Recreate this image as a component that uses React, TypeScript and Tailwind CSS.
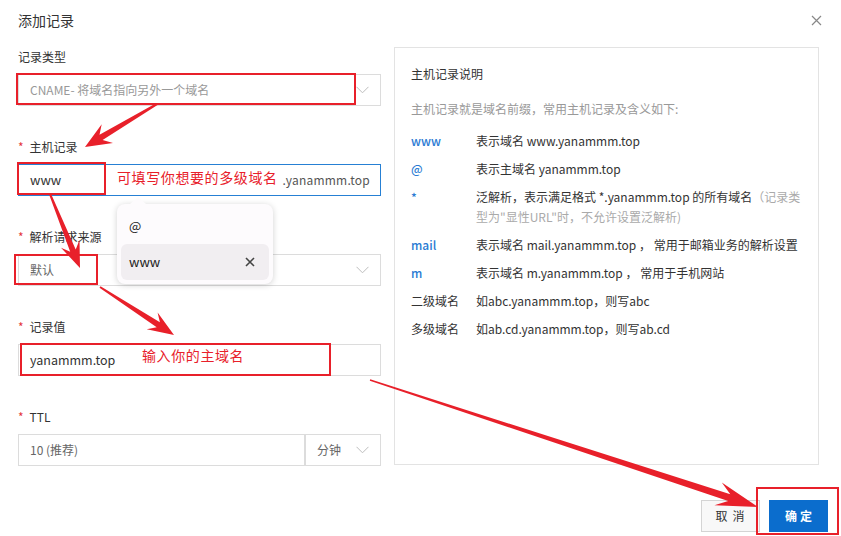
import React from "react";

const RED = "#e8202a";

type Arrow = {
  x1: number;
  y1: number;
  x2: number;
  y2: number;
  tail: number;
  neck: number;
  head: number;
  headW: number;
};

const ARROWS: Arrow[] = [
  { x1: 157, y1: 104, x2: 85, y2: 147, tail: 2, neck: 6, head: 26, headW: 22 },
  { x1: 50, y1: 194, x2: 80, y2: 268, tail: 2, neck: 6, head: 26, headW: 20 },
  { x1: 100, y1: 287, x2: 174, y2: 335, tail: 2, neck: 6, head: 26, headW: 20 },
  { x1: 370, y1: 380, x2: 758, y2: 507, tail: 1.5, neck: 7, head: 42, headW: 24 },
];

function arrowPoints(a: Arrow) {
  const dx = a.x2 - a.x1;
  const dy = a.y2 - a.y1;
  const len = Math.hypot(dx, dy);
  const ux = dx / len;
  const uy = dy / len;
  const nx = -uy;
  const ny = ux;
  const pt = (bx: number, by: number, along: number, side: number) =>
    `${(bx + ux * along + nx * side).toFixed(1)},${(by + uy * along + ny * side).toFixed(1)}`;
  return [
    pt(a.x1, a.y1, 0, a.tail / 2),
    pt(a.x2, a.y2, -a.head * 0.72, a.neck / 2),
    pt(a.x2, a.y2, -a.head, a.headW / 2),
    pt(a.x2, a.y2, 0, 0),
    pt(a.x2, a.y2, -a.head, -a.headW / 2),
    pt(a.x2, a.y2, -a.head * 0.72, -a.neck / 2),
    pt(a.x1, a.y1, 0, -a.tail / 2),
  ].join(" ");
}

function Chevron() {
  return (
    <svg width="13" height="8" viewBox="0 0 13 8" className="shrink-0">
      <path d="M0.5 0.8 L6.5 6.8 L12.5 0.8" fill="none" stroke="#bdbdbd" strokeWidth="1" />
    </svg>
  );
}

function Label({ text, required }: { text: string; required?: boolean }) {
  return (
    <div className="mb-[8px] flex h-[18px] items-center text-[12px] leading-[18px] text-[#333]">
      {required && <span className="mr-[6px] text-[12px] text-[#e4393c]">*</span>}
      {text}
    </div>
  );
}

const rows: { key: string; blue?: boolean; value: React.ReactNode }[] = [
  { key: "www", blue: true, value: "表示域名 www.yanammm.top" },
  { key: "@", blue: true, value: "表示主域名 yanammm.top" },
  {
    key: "*",
    blue: true,
    value: (
      <>
        泛解析，表示满足格式 *.yanammm.top 的所有域名
        <span className="text-[#aaa]">
          （记录类
          <br />
          型为"显性URL"时，不允许设置泛解析)
        </span>
      </>
    ),
  },
  { key: "mail", blue: true, value: "表示域名 mail.yanammm.top ， 常用于邮箱业务的解析设置" },
  { key: "m", blue: true, value: "表示域名 m.yanammm.top ， 常用于手机网站" },
  { key: "二级域名", value: "如abc.yanammm.top，则写abc" },
  { key: "多级域名", value: "如ab.cd.yanammm.top，则写ab.cd" },
];

export default function App() {
  return (
    <div
      className="relative h-[536px] w-[841px] overflow-hidden bg-white"
      style={{ fontFamily: '"Noto Sans CJK SC", "Liberation Sans", sans-serif' }}
    >
      {/* header */}
      <div className="flex items-center justify-between pl-[18px] pr-[19px] pt-[10px]">
        <h2 className="text-[14px] leading-[20px] text-[#333]">添加记录</h2>
        <svg width="11" height="11" viewBox="0 0 11 11">
          <path d="M1 1 L10 10 M10 1 L1 10" stroke="#888" strokeWidth="1.2" />
        </svg>
      </div>

      <div className="mt-[18px] flex gap-[13px] pl-[18px]">
        {/* form */}
        <div className="w-[363px]">
          <Label text="记录类型" />
          <div className="flex h-[32px] items-center justify-between border border-[#dcdcdc] pl-[11px] pr-[11px] text-[12px] text-[#999]">
            <span>CNAME- 将域名指向另外一个域名</span>
            <Chevron />
          </div>

          <div className="mt-[32px]">
            <Label text="主机记录" required />
            <div className="flex h-[32px] items-center justify-between border border-[#2680d4] pl-[11px] pr-[10px] text-[12px]">
              <span className="text-[13px] text-[#333]">www</span>
              <span className="text-[12px] tracking-[0.2px] text-[#555]">.yanammm.top</span>
            </div>
          </div>

          <div className="mt-[32px]">
            <Label text="解析请求来源" required />
            <div className="flex h-[32px] items-center justify-between border border-[#dcdcdc] pl-[11px] pr-[11px] text-[12px] text-[#666]">
              <span>默认</span>
              <Chevron />
            </div>
          </div>

          <div className="mt-[32px]">
            <Label text="记录值" required />
            <div className="flex h-[32px] items-center border border-[#dcdcdc] pl-[11px] text-[12.5px] text-[#333]">
              yanammm.top
            </div>
          </div>

          <div className="mt-[32px]">
            <Label text="TTL" required />
            <div className="flex h-[32px] border border-[#dcdcdc] text-[12px] text-[#666]">
              <div className="flex flex-1 items-center border-r-2 border-[#dcdcdc] pl-[11px]">10 (推荐)</div>
              <div className="flex w-[74px] items-center justify-between pl-[11px] pr-[11px]">
                <span>分钟</span>
                <Chevron />
              </div>
            </div>
          </div>
        </div>

        {/* description panel */}
        <div className="mt-[-1px] h-[418px] w-[425px] border border-[#e3e3e3] pl-[16px] pr-[12px] pt-[17px] text-[12px] text-[#333]">
          <div className="leading-[18px]">主机记录说明</div>
          <div className="mt-[16px] leading-[20px] text-[#999]">主机记录就是域名前缀，常用主机记录及含义如下:</div>
          <div className="mt-[12px] flex flex-col gap-[8px]">
            {rows.map((r) => (
              <div key={r.key} className="flex leading-[20px]">
                <div className={`w-[65px] shrink-0 ${r.blue ? "font-medium text-[#2a7bd3]" : "text-[#333]"}`}>
                  {r.key}
                </div>
                <div className="text-[#333]">{r.value}</div>
              </div>
            ))}
          </div>
        </div>
      </div>

      {/* footer */}
      <div className="mt-[34px] flex justify-end gap-[9px] pr-[13px]">
        <button className="h-[32px] w-[59px] border border-[#d4d4d4] bg-[#f8f8f8] pl-[4px] text-[12px] tracking-[5px] text-[#333]">
          取消
        </button>
        <button className="h-[32px] w-[59px] bg-[#0b6dcd] pl-[3px] text-[12px] font-bold tracking-[3px] text-white">
          确定
        </button>
      </div>

      {/* suggestion popup */}
      <div className="absolute left-[117px] top-[204px] w-[156px] rounded-[8px] bg-[#fdfbfd] px-[4px] pb-[4px] pt-[4px] shadow-[0_1px_6px_rgba(0,0,0,0.18)]">
        <div className="absolute left-[13px] top-[-7px] h-0 w-0 border-x-[8px] border-b-[7px] border-x-transparent border-b-[#fdfbfd]" />
        <div className="flex h-[36px] items-center pl-[8px] text-[13px] text-[#222]">@</div>
        <div className="flex h-[36px] items-center justify-between rounded-[6px] bg-[#f1eef1] pl-[8px] pr-[14px] text-[13px] text-[#222]">
          <span>www</span>
          <svg width="10" height="10" viewBox="0 0 10 10">
            <path d="M1 1 L9 9 M9 1 L1 9" stroke="#444" strokeWidth="1.6" />
          </svg>
        </div>
      </div>

      {/* annotations */}
      <div className="pointer-events-none absolute left-[16px] top-[73px] h-[32px] w-[340px] border-2 border-[#e8202a]" />
      <div className="pointer-events-none absolute left-[17px] top-[162px] h-[33px] w-[89px] border-2 border-[#e8202a]" />
      <div className="pointer-events-none absolute left-[14px] top-[254px] h-[31px] w-[84px] border-2 border-[#e8202a]" />
      <div className="pointer-events-none absolute left-[20px] top-[343px] h-[33px] w-[311px] border-2 border-[#e8202a]" />
      <div className="pointer-events-none absolute left-[756px] top-[487px] h-[48px] w-[83px] border-2 border-[#e8202a]" />

      <span className="absolute left-[117px] top-[167px] text-[14px] font-normal leading-[20px] tracking-[0.6px] text-[#e8202a]">
        可填写你想要的多级域名
      </span>
      <span className="absolute left-[142px] top-[345px] text-[14px] font-normal leading-[20px] tracking-[0.6px] text-[#e8202a]">
        输入你的主域名
      </span>

      <svg className="pointer-events-none absolute left-0 top-0" width="841" height="536">
        {ARROWS.map((a, i) => (
          <polygon key={i} points={arrowPoints(a)} fill={RED} />
        ))}
      </svg>
    </div>
  );
}
